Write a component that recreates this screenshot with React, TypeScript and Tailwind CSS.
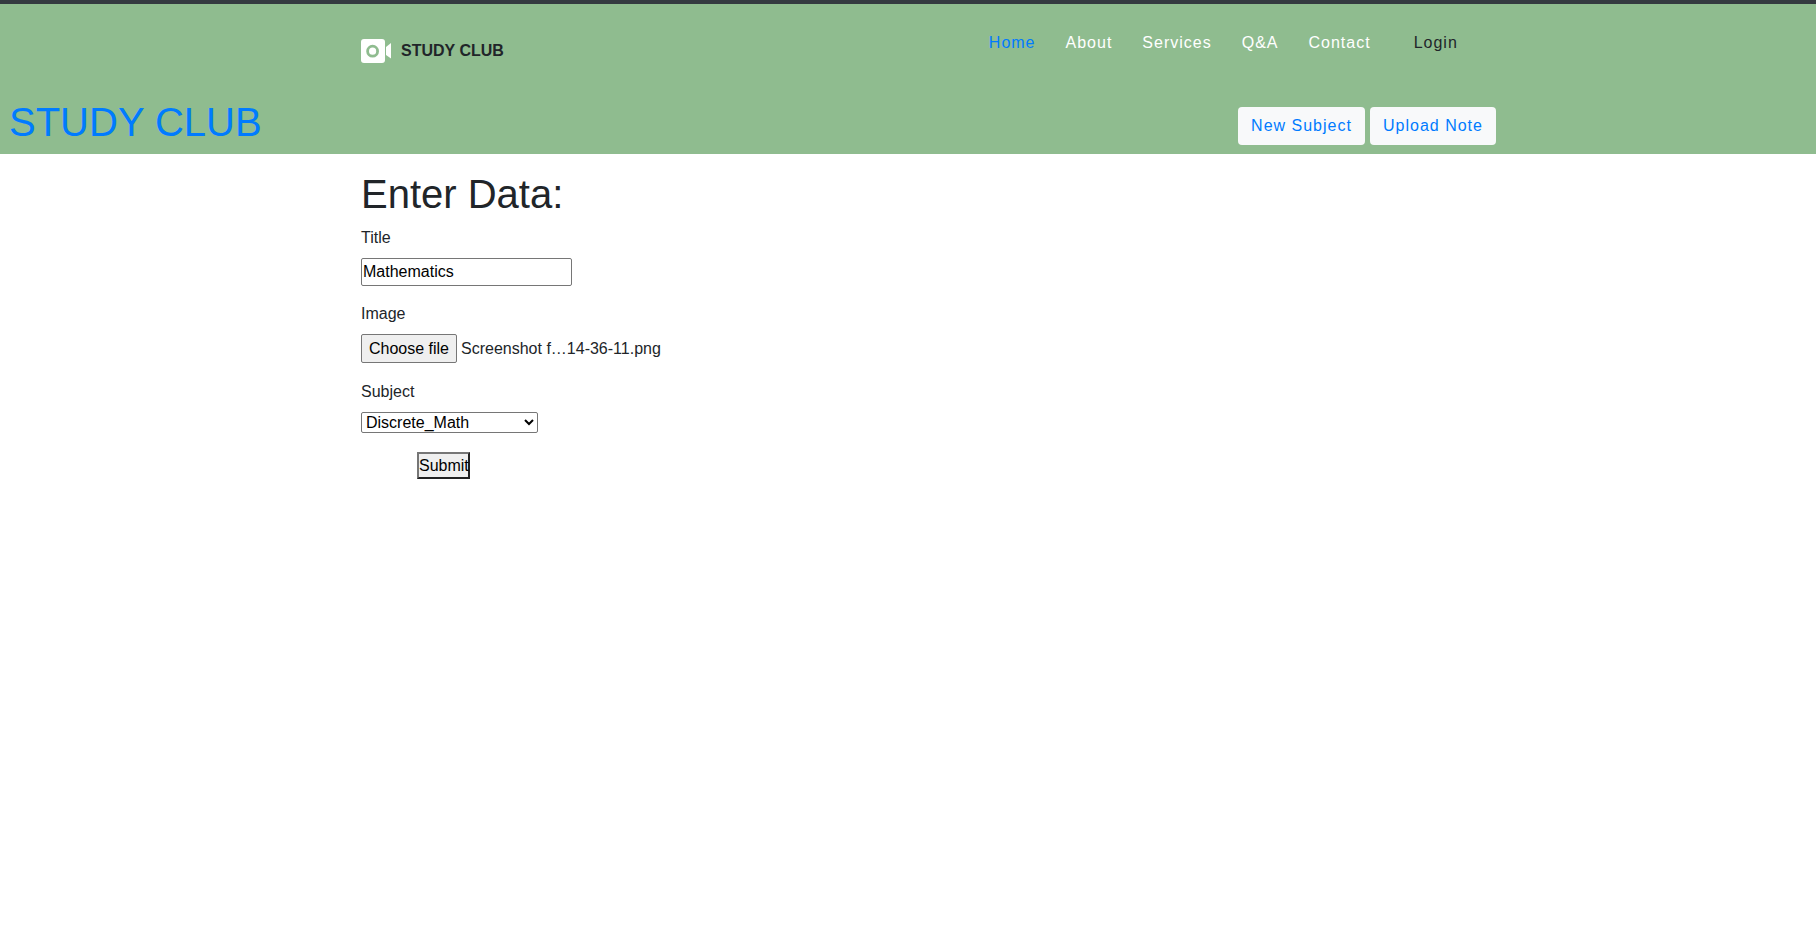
const navLinks = ["About", "Services", "Q&A", "Contact"];

const Logo = () => (
  <svg width="30" height="24" viewBox="0 0 30 24" className="block shrink-0">
    <rect x="0" y="0" width="24" height="24" rx="3" fill="#ffffff" />
    <circle cx="11.6" cy="12.2" r="5" fill="none" stroke="#8fbc8f" strokeWidth="2.8" />
    <path d="M25 8 L30 4 V19.5 L25 16 Z" fill="#ffffff" />
  </svg>
);

const Header = () => (
  <header className="border-t-4 border-[#343a40] bg-[#8fbc8f]">
    <div className="mx-auto flex h-[85px] w-[1140px] pl-[23px]">
      <a className="mt-[35px] flex h-[24px] items-center gap-[10px] text-base font-bold text-[#212529]">
        <Logo />
        <span>STUDY CLUB</span>
      </a>
      <nav className="ml-[485px] mt-[27px] flex h-[24px] items-center gap-[30px] text-base tracking-[1px] text-white">
        <a className="text-[#007bff]">Home</a>
        {navLinks.map((link) => (
          <a key={link}>{link}</a>
        ))}
        <a className="ml-[13px] text-[#212529]">Login</a>
      </nav>
    </div>
    <div className="flex h-[65px] items-start justify-between pl-[9px] pr-[320px]">
      <h1 className="mt-[9px] text-[40px] leading-[48px] text-[#007bff]">STUDY CLUB</h1>
      <div className="mt-[18px] flex gap-[5px] text-base tracking-[1px] text-[#007bff]">
        <a className="flex h-[38px] w-[127px] items-center justify-center rounded-[4px] bg-[#f8f9fa]">New Subject</a>
        <a className="flex h-[38px] w-[126px] items-center justify-center rounded-[4px] bg-[#f8f9fa]">Upload Note</a>
      </div>
    </div>
  </header>
);

const Form = () => (
  <main className="mx-auto w-[1140px] pl-[23px] text-base text-[#212529]">
    <h2 className="mt-[16px] text-[40px] leading-[48px]">Enter Data:</h2>
    <form>
      <label className="mt-[8px] block leading-[24px]">Title</label>
      <input
        type="text"
        defaultValue="Mathematics"
        className="mt-[8px] block h-[28px] w-[211px] rounded-[2px] border border-[#767676] px-[1px] text-black"
      />
      <label className="mt-[16px] block leading-[24px]">Image</label>
      <div className="mt-[8px] flex h-[30px] items-start gap-[4px]">
        <button
          type="button"
          className="h-[29px] w-[96px] rounded-[2px] border border-[#767676] bg-[#efefef] text-black"
        >
          Choose file
        </button>
        <span className="leading-[29px]">Screenshot f…14-36-11.png</span>
      </div>
      <label className="mt-[16px] block leading-[24px]">Subject</label>
      <select className="mt-[8px] block h-[21px] w-[177px] appearance-auto rounded-[2px] border border-[#767676] bg-white text-black">
        <option>Discrete_Math</option>
      </select>
      <button
        type="submit"
        className="ml-[56px] mt-[19px] block h-[27px] w-[53px] border-2 border-t-[#767676] border-l-[#767676] border-r-[#212121] border-b-[#212121] bg-[#efefef] text-black"
      >
        Submit
      </button>
    </form>
  </main>
);

export default function App() {
  return (
    <div className="min-h-[927px] bg-white font-['Liberation_Sans',Arial,sans-serif]">
      <Header />
      <Form />
    </div>
  );
}
